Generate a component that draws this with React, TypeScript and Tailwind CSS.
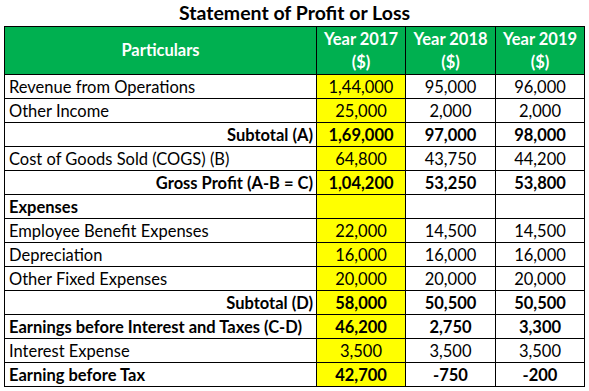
import React from "react";

type Row = {
  label: string;
  values: [string, string, string];
  kind?: "normal" | "subtotal" | "bold";
};

const rows: Row[] = [
  { label: "Revenue from Operations", values: ["1,44,000", "95,000", "96,000"] },
  { label: "Other Income", values: ["25,000", "2,000", "2,000"] },
  { label: "Subtotal (A)", values: ["1,69,000", "97,000", "98,000"], kind: "subtotal" },
  { label: "Cost of Goods Sold (COGS) (B)", values: ["64,800", "43,750", "44,200"] },
  { label: "Gross Profit (A-B = C)", values: ["1,04,200", "53,250", "53,800"], kind: "subtotal" },
  { label: "Expenses", values: ["", "", ""], kind: "bold" },
  { label: "Employee Benefit Expenses", values: ["22,000", "14,500", "14,500"] },
  { label: "Depreciation", values: ["16,000", "16,000", "16,000"] },
  { label: "Other Fixed Expenses", values: ["20,000", "20,000", "20,000"] },
  { label: "Subtotal (D)", values: ["58,000", "50,500", "50,500"], kind: "subtotal" },
  { label: "Earnings before Interest and Taxes (C-D)", values: ["46,200", "2,750", "3,300"], kind: "bold" },
  { label: "Interest Expense", values: ["3,500", "3,500", "3,500"] },
  { label: "Earning before Tax", values: ["42,700", "-750", "-200"], kind: "bold" },
];

const years = ["2017", "2018", "2019"];

export default function App() {
  return (
    <div
      className="w-[589px] h-[391px] bg-white text-black"
      style={{ fontFamily: "Lato, 'Open Sans', sans-serif" }}
    >
      <h1 className="h-[26px] pt-[1px] text-center text-[19.5px] font-bold leading-[24px]">
        Statement of Profit or Loss
      </h1>
      <table className="mx-auto w-[581px] table-fixed border-collapse text-[16.5px]">
        <colgroup>
          <col className="w-[312px]" />
          <col className="w-[89px]" />
          <col className="w-[90px]" />
          <col className="w-[89px]" />
        </colgroup>
        <thead>
          <tr className="h-[48px] bg-[#00b050] text-white">
            <th className="border border-black text-center font-bold">Particulars</th>
            {years.map((y) => (
              <th key={y} className="border border-black text-center font-bold leading-[23px]">
                <div>Year {y}</div>
                <div>($)</div>
              </th>
            ))}
          </tr>
        </thead>
        <tbody>
          {rows.map((r) => {
            const bold = r.kind === "subtotal" || r.kind === "bold";
            return (
              <tr key={r.label} className={`h-[24px] leading-[22px] ${bold ? "font-bold" : ""}`}>
                <td
                  className={`border border-black whitespace-nowrap ${
                    r.kind === "subtotal" ? "pr-[3px] text-right" : "pl-[4px] text-left"
                  }`}
                >
                  {r.label}
                </td>
                {r.values.map((v, i) => (
                  <td
                    key={i}
                    className={`border border-black text-center ${i === 0 ? "bg-[#ffff00]" : ""}`}
                  >
                    {v}
                  </td>
                ))}
              </tr>
            );
          })}
        </tbody>
      </table>
    </div>
  );
}
